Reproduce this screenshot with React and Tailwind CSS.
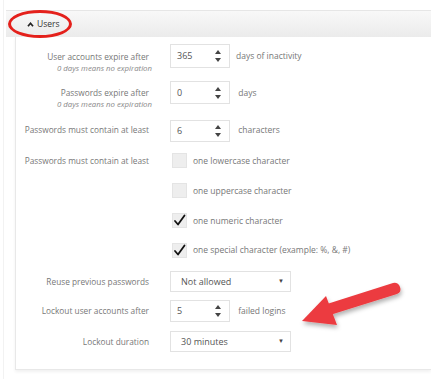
import React from 'react';

const font = { fontFamily: '"Open Sans", "Liberation Sans", sans-serif' };

function Spinner() {
  return (
    <div className="flex flex-col items-center gap-[4px] mr-[8px]">
      <svg width="6" height="4" viewBox="0 0 6 4"><path d="M0 4 L3 0 L6 4 Z" fill="#444" /></svg>
      <svg width="6" height="4" viewBox="0 0 6 4"><path d="M0 0 L3 4 L6 0 Z" fill="#444" /></svg>
    </div>
  );
}

function NumInput({ value, h = 'h-[24px]' }) {
  return (
    <div className={`w-[60px] ${h} border border-[#e2e2e2] bg-white flex items-center justify-between pl-[6px] text-[9px] text-[#555]`}>
      <span>{value}</span>
      <Spinner />
    </div>
  );
}

function Select({ value }) {
  return (
    <div className="w-[121px] h-[21px] border border-[#e2e2e2] bg-white flex items-center justify-between pl-[10px] pr-[6px] text-[9px] text-[#555]">
      <span>{value}</span>
      <span className="text-[6px] text-[#444]">▼</span>
    </div>
  );
}

function Check({ on }) {
  return (
    <div className="ml-[2px] w-[15px] h-[15px] bg-[#eeeeee] border border-[#e4e4e4] flex items-center justify-center">
      {on && (
        <svg width="13" height="13" viewBox="0 0 13 13">
          <path d="M2 7 L5 10.5 L11.5 1.5" fill="none" stroke="#111" strokeWidth="1.8" strokeLinecap="round" strokeLinejoin="round" />
        </svg>
      )}
    </div>
  );
}

function Row({ h, label, sub, lpt = 'pt-[5px]', children }) {
  return (
    <div className={`flex ${h}`}>
      <div className={`w-[133px] shrink-0 text-right whitespace-nowrap ${lpt}`}>
        {label && <div className="text-[8.3px] leading-[13px] text-[#777]">{label}</div>}
        {sub && <div className="text-[7.8px] leading-[11px] italic text-[#888] mr-[-3px]">{sub}</div>}
      </div>
      <div className="ml-[21px] flex items-start gap-[6px]">{children}</div>
    </div>
  );
}

function Side({ children, pt = 'pt-[5px]' }) {
  return <span className={`text-[8.5px] leading-[13px] whitespace-nowrap text-[#777] ${pt}`}>{children}</span>;
}

export default function App() {
  return (
    <div className="relative w-[431px] h-[379px] bg-white overflow-hidden" style={font}>
      <div className="ml-[3px] border-l border-[#f2f2f2] h-full pt-[10px]">
        <div className="h-[27px] ml-[2px] border-t border-[#e6e6e6] bg-gradient-to-b from-[#f8f8f8] to-[#ebebeb] flex items-center pl-[21px] gap-[3px]">
          <svg width="7" height="5" viewBox="0 0 7 5"><path d="M1 4.3 L3.5 1.3 L6 4.3" fill="none" stroke="#222" strokeWidth="1.7" /></svg>
          <span className="text-[8.5px] text-[#333]">Users</span>
        </div>
        <div className="ml-[11px] h-[333px] border-l border-b border-[#e8e8e8] shadow-[0_2px_3px_rgba(0,0,0,0.06)] pt-[7px]">
          <Row h="h-[37px]" label="User accounts expire after" sub="0 days means no expiration" lpt="pt-[6px]">
            <NumInput value="365" />
            <Side pt="pt-[5px]">days of inactivity</Side>
          </Row>
          <Row h="h-[39px]" label="Passwords expire after" sub="0 days means no expiration" lpt="pt-[5px]">
            <NumInput value="0" h="h-[23px]" />
            <Side pt="pt-[5px]">&nbsp;days</Side>
          </Row>
          <Row h="h-[33px]" label="Passwords must contain at least" lpt="pt-[3px]">
            <NumInput value="6" h="h-[22px]" />
            <Side pt="pt-[3px]">&nbsp;characters</Side>
          </Row>
          <Row h="h-[30px]" label="Passwords must contain at least" lpt="pt-[1px]">
            <Check />
            <Side pt="pt-[1px]">one lowercase character</Side>
          </Row>
          <Row h="h-[30px]">
            <Check />
            <Side pt="pt-[1px]">one uppercase character</Side>
          </Row>
          <Row h="h-[30px]">
            <Check on />
            <Side pt="pt-[1px]">one numeric character</Side>
          </Row>
          <Row h="h-[28px]">
            <Check on />
            <Side pt="pt-[0px]">one special character (example: %, &amp;, #)</Side>
          </Row>
          <Row h="h-[29px]" label="Reuse previous passwords" lpt="pt-[4px]">
            <Select value="Not allowed" />
          </Row>
          <Row h="h-[31px]" label="Lockout user accounts after" lpt="pt-[4px]">
            <NumInput value="5" h="h-[22px]" />
            <Side pt="pt-[4px]">&nbsp;failed logins</Side>
          </Row>
          <Row h="h-[25px]" label="Lockout duration" lpt="pt-[4px]">
            <Select value="30 minutes" />
          </Row>
        </div>
      </div>

      <div className="absolute left-[8px] top-[10px] w-[64px] h-[28px] rounded-[50%] border-[3px] border-[#e4201b]" />

      <svg className="absolute left-0 top-0" width="431" height="379" viewBox="0 0 431 379">
        <defs>
          <filter id="sh" x="-20%" y="-20%" width="140%" height="160%">
            <feDropShadow dx="1" dy="3" stdDeviation="2" floodColor="#000" floodOpacity="0.3" />
          </filter>
        </defs>
        <g filter="url(#sh)" fill="#ec3b3f">
          <path d="M393 283 L327 304 L330 315 L397 294 Q402 292 400 287 Q398 282 393 283 Z" />
          <path d="M302 321 L326 296 L337 325 Z" />
        </g>
      </svg>
    </div>
  );
}
